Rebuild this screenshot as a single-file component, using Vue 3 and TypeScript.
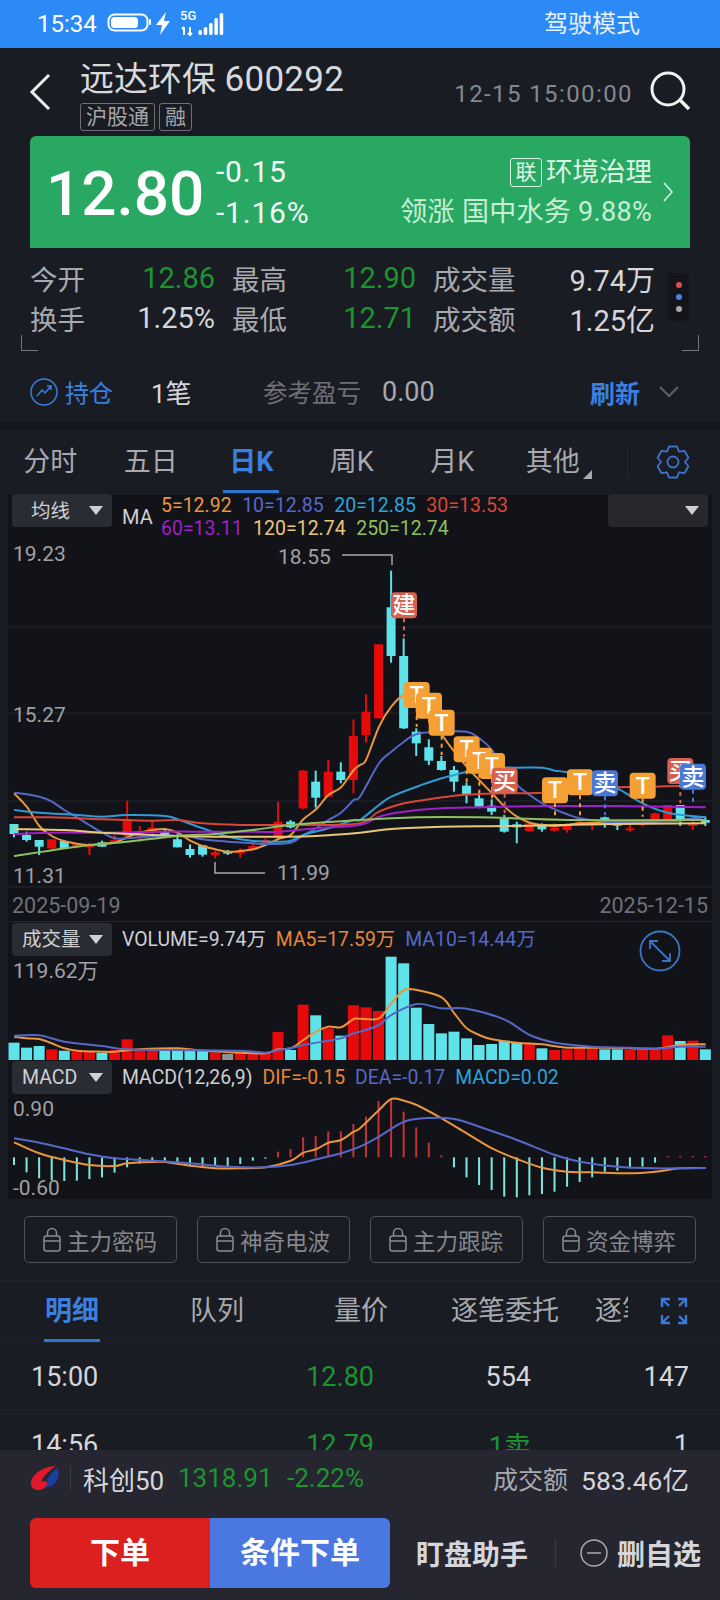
<script setup lang="ts">
type Pt = [number, number]

// chart geometry was read off 3x crops, so values come in as crop units
const colX = (i: number) => 14 + 12.57 * i
const mainY = (v: number) => 530 + v / 3
const lowY = (v: number) => 920 + v / 3

function smooth(left: Pt[], right: Pt[], toY: (v: number) => number): string {
  const pts: Pt[] = [
    ...left.map(([x, y]): Pt => [x / 3, toY(y)]),
    ...right.map(([x, y]): Pt => [360 + x / 3, toY(y)]),
  ]
  let d = `M${pts[0][0].toFixed(1)} ${pts[0][1].toFixed(1)}`
  for (let i = 0; i < pts.length - 1; i++) {
    const p0 = pts[Math.max(i - 1, 0)]
    const p1 = pts[i]
    const p2 = pts[i + 1]
    const p3 = pts[Math.min(i + 2, pts.length - 1)]
    const c1x = p1[0] + (p2[0] - p0[0]) / 6
    const c1y = p1[1] + (p2[1] - p0[1]) / 6
    const c2x = p2[0] - (p3[0] - p1[0]) / 6
    const c2y = p2[1] - (p3[1] - p1[1]) / 6
    d += `C${c1x.toFixed(1)} ${c1y.toFixed(1)} ${c2x.toFixed(1)} ${c2y.toFixed(1)} ${p2[0].toFixed(1)} ${p2[1].toFixed(1)}`
  }
  return d
}

const UP = '#e60a0a'
const DOWN = '#5fe3ea'

// bodyTop, bodyBottom, wickTop, wickBottom, up?
const rawCandles: [number, number, number, number, number][] = [
  [882, 912, 882, 922, 0], [915, 930, 905, 935, 0], [930, 950, 930, 975, 0], [928, 955, 928, 962, 1],
  [933, 955, 933, 955, 0], [940, 950, 938, 955, 1], [942, 952, 938, 975, 1], [937, 950, 932, 950, 0],
  [930, 940, 915, 942, 1], [870, 918, 812, 922, 1], [903, 920, 888, 935, 1], [893, 905, 870, 912, 1],
  [905, 915, 895, 918, 0], [928, 952, 912, 952, 0], [957, 975, 943, 983, 0], [946, 974, 946, 980, 0],
  [967, 975, 962, 985, 1], [965, 970, 960, 975, 0], [962, 970, 955, 983, 1], [948, 960, 942, 962, 1],
  [930, 945, 925, 948, 1], [875, 918, 815, 925, 1], [875, 892, 870, 895, 0], [722, 835, 720, 838, 1],
  [755, 803, 722, 833, 0], [725, 800, 690, 802, 1], [725, 750, 697, 760, 0], [618, 750, 568, 790, 1],
  [545, 615, 493, 638, 1], [343, 565, 343, 565, 1], [232, 378, 122, 398, 0], [378, 595, 325, 597, 0],
  [605, 640, 595, 678, 0], [652, 692, 628, 705, 0], [693, 720, 678, 722, 0], [720, 755, 708, 785, 0],
  [767, 793, 758, 820, 0], [805, 830, 795, 835, 0], [827, 845, 808, 855, 0], [866, 905, 855, 908, 0],
  [883, 892, 875, 940, 0], [880, 903, 875, 905, 1], [883, 898, 880, 905, 0], [893, 902, 880, 905, 1],
  [888, 900, 880, 908, 1], [875, 880, 870, 885, 1], [878, 884, 875, 900, 1], [862, 880, 860, 893, 0],
  [880, 887, 870, 900, 0], [895, 901, 885, 905, 1], [878, 882, 870, 890, 1], [850, 870, 848, 870, 1],
  [825, 868, 825, 868, 1], [825, 870, 825, 888, 0], [880, 888, 870, 900, 1], [870, 878, 860, 888, 0],
]
const candles = rawCandles.map(([t, b, wt, wb, up], i) => ({
  x: colX(i),
  top: mainY(t),
  h: Math.max((b - t) / 3, 2),
  wt: mainY(wt),
  wb: mainY(wb),
  color: up ? UP : DOWN,
}))

const maLines = [
  {
    color: '#e9963f',
    d: smooth(
      [[42, 790], [80, 830], [118, 888], [155, 918], [193, 933], [231, 941], [268, 945], [306, 941], [344, 938], [381, 922], [419, 908], [457, 900], [495, 897], [533, 908], [571, 932], [608, 948], [646, 958], [684, 965], [721, 963], [759, 958], [797, 945], [835, 927], [872, 915], [910, 868], [948, 838], [985, 795], [1023, 772], [1061, 720]],
      [[0, 705], [18, 690], [57, 590], [94, 530], [132, 495], [170, 500], [210, 550], [250, 620], [320, 710], [396, 790], [434, 830], [471, 860], [509, 878], [547, 885], [585, 888], [622, 885], [660, 880], [735, 878], [810, 880], [886, 875], [961, 870], [1037, 860]],
      mainY,
    ),
  },
  {
    color: '#5568c8',
    d: smooth(
      [[42, 788], [118, 800], [155, 815], [193, 840], [231, 862], [268, 885], [306, 907], [344, 925], [381, 925], [419, 922], [495, 917], [533, 918], [571, 920], [608, 928], [684, 935], [759, 940], [797, 942], [872, 938], [910, 915], [948, 895], [985, 870], [1023, 848], [1061, 810]],
      [[0, 800], [57, 700], [94, 665], [132, 635], [170, 612], [245, 605], [320, 605], [358, 625], [396, 660], [434, 720], [471, 765], [509, 795], [547, 820], [585, 838], [622, 853], [660, 865], [735, 875], [810, 875], [886, 875], [961, 872], [1037, 860]],
      mainY,
    ),
  },
  {
    color: '#2f9bd4',
    d: smooth(
      [[42, 840], [118, 848], [231, 855], [306, 860], [381, 855], [495, 858], [533, 868], [608, 895], [684, 920], [759, 933], [835, 935], [872, 932], [910, 915], [985, 895], [1061, 870]],
      [[0, 870], [57, 825], [94, 800], [170, 770], [245, 745], [283, 735], [320, 725], [396, 713], [471, 713], [547, 713], [585, 722], [622, 727], [700, 750], [772, 775], [848, 820], [923, 848], [1037, 862]],
      mainY,
    ),
  },
  {
    color: '#d8453a',
    d: smooth(
      [[42, 862], [155, 862], [306, 868], [457, 872], [533, 870], [608, 880], [721, 885], [835, 885], [948, 885]],
      [[0, 880], [57, 845], [132, 820], [207, 808], [283, 797], [358, 792], [434, 790], [547, 788], [660, 778], [772, 772], [886, 770], [961, 768], [1000, 775]],
      mainY,
    ),
  },
  {
    color: '#a020c8',
    d: smooth(
      [[42, 912], [157, 908], [306, 908], [495, 905], [608, 905], [721, 905], [835, 905], [948, 895]],
      [[0, 885], [57, 860], [132, 845], [245, 835], [358, 832], [547, 828], [772, 828], [1037, 832]],
      mainY,
    ),
  },
  {
    color: '#e8c878',
    d: smooth(
      [[42, 897], [193, 900], [306, 908], [457, 915], [533, 918], [646, 920], [835, 920], [948, 918]],
      [[0, 908], [94, 897], [245, 890], [471, 888], [772, 882], [1037, 880]],
      mainY,
    ),
  },
  {
    color: '#8cc060',
    d: smooth(
      [[42, 978], [231, 950], [381, 935], [533, 918], [646, 912], [759, 900], [872, 885]],
      [[0, 870], [170, 862], [358, 862], [660, 870], [1037, 870]],
      mainY,
    ),
  },
]

const ORANGE = '#f5a035'
const SALMON = '#d8604f'
const BLUE = '#4a78d8'
// label, centre x, centre y, dashed line end (crop units of the right half)
const rawMarkers: [string, number, number, number, string][] = [
  ['建', 132, 226, 320, SALMON],
  ['T', 170, 495, 590, ORANGE],
  ['T', 207, 527, 590, ORANGE],
  ['T', 245, 578, 675, ORANGE],
  ['T', 320, 658, 760, ORANGE],
  ['T', 358, 692, 790, ORANGE],
  ['T', 396, 708, 805, ORANGE],
  ['买', 434, 752, 850, SALMON],
  ['T', 585, 781, 870, ORANGE],
  ['T', 660, 757, 870, ORANGE],
  ['卖', 735, 760, 855, BLUE],
  ['T', 848, 767, 860, ORANGE],
  ['买', 961, 723, 820, SALMON],
  ['卖', 999, 740, 820, BLUE],
]
const markers = rawMarkers.map(([label, x, y, to, color]) => ({
  label,
  x: 360 + x / 3,
  y: mainY(y),
  to: mainY(to),
  color,
}))

const volTops = [
  368, 383, 378, 388, 392, 395, 395, 398, 390, 358, 390, 388, 392, 392, 388, 393, 398, 402, 398, 400, 398, 336, 390, 254,
  286, 325, 347, 256, 262, 273, 110, 130, 263, 312, 340, 335, 355, 375, 372, 362, 367, 372, 385, 390, 388, 382, 385, 388,
  388, 390, 390, 390, 346, 363, 362, 388,
]
const volBars = volTops.map((t, i) => ({
  x: colX(i),
  top: lowY(t),
  h: (420 - t) / 3,
  color: i === 17 ? '#8e9096' : rawCandles[i][4] ? UP : DOWN,
}))
const volLines = [
  {
    color: '#e9963f',
    d: smooth(
      [[42, 350], [80, 355], [118, 357], [155, 370], [193, 385], [231, 392], [306, 395], [344, 395], [419, 388], [533, 385], [608, 392], [721, 398], [797, 400], [835, 388], [872, 385], [910, 360], [948, 335], [985, 320], [1023, 322], [1061, 297]],
      [[0, 296], [57, 295], [94, 250], [132, 210], [170, 210], [245, 232], [283, 280], [320, 325], [358, 345], [396, 358], [471, 368], [547, 373], [622, 383], [735, 383], [886, 386], [961, 375], [1037, 373]],
      lowY,
    ),
  },
  {
    color: '#5568c8',
    d: smooth(
      [[42, 347], [118, 346], [193, 365], [306, 378], [381, 388], [533, 390], [721, 392], [797, 398], [835, 390], [872, 385], [910, 375], [985, 362], [1023, 355], [1061, 340]],
      [[0, 335], [57, 315], [94, 285], [170, 252], [245, 265], [320, 266], [432, 298], [509, 345], [585, 368], [697, 380], [810, 383], [886, 386], [961, 380], [1037, 380]],
      lowY,
    ),
  },
]

const macdEnds = [
  735, 757, 775, 780, 783, 782, 777, 772, 758, 742, 730, 725, 722, 732, 735, 738, 738, 738, 732, 722, 716, 695, 687, 652,
  648, 634, 634, 612, 590, 543, 540, 575, 622, 668, 706, 742, 772, 795, 810, 830, 832, 826, 822, 815, 800, 786, 772, 755,
  752, 745, 740, 728, 708, 708, 708, 708,
]
const macdBars = macdEnds.map((e, i) => {
  const up = e < 712
  return {
    x: colX(i),
    top: lowY(up ? e : 712),
    h: Math.abs(e - 712) / 3,
    color: up ? '#c43434' : '#7de8e0',
  }
})
const macdLines = [
  {
    color: '#e9963f',
    d: smooth(
      [[42, 667], [118, 700], [193, 720], [268, 735], [344, 738], [381, 730], [457, 726], [495, 726], [571, 737], [646, 745], [721, 745], [797, 742], [872, 722], [910, 698], [948, 688], [985, 668], [1023, 660], [1061, 635]],
      [[0, 625], [57, 570], [94, 537], [132, 542], [170, 555], [245, 595], [320, 640], [396, 685], [471, 717], [547, 743], [622, 755], [697, 757], [810, 760], [886, 755], [961, 745], [1037, 744]],
      lowY,
    ),
  },
  {
    color: '#5568c8',
    d: smooth(
      [[42, 655], [118, 668], [193, 685], [268, 703], [344, 715], [457, 722], [571, 730], [684, 740], [797, 742], [872, 735], [948, 718], [1023, 700]],
      [[0, 680], [57, 650], [132, 605], [207, 594], [283, 597], [358, 620], [471, 660], [585, 705], [660, 725], [772, 740], [886, 745], [961, 745], [1037, 744]],
      lowY,
    ),
  },
]

function gearPath(cx: number, cy: number, rOut: number, rIn: number, teeth: number): string {
  const pts: string[] = []
  const step = (Math.PI * 2) / teeth
  for (let i = 0; i < teeth; i++) {
    const a = -Math.PI / 2 + i * step
    const offs: [number, number][] = [
      [-0.5, rIn], [-0.24, rOut], [0.24, rOut], [0.5, rIn],
    ]
    for (const [o, r] of offs) {
      const t = a + o * step
      pts.push(`${(cx + Math.cos(t) * r).toFixed(1)} ${(cy + Math.sin(t) * r).toFixed(1)}`)
    }
  }
  return `M${pts.join('L')}Z`
}
const gear = gearPath(17, 17, 16, 12, 6)

const maRowOne = [
  { text: '5=12.92', color: '#e9963f' },
  { text: '10=12.85', color: '#5568c8' },
  { text: '20=12.85', color: '#2aa3dc' },
  { text: '30=13.53', color: '#d8453a' },
]
const maRowTwo = [
  { text: '60=13.11', color: '#a020c8' },
  { text: '120=12.74', color: '#e8c878' },
  { text: '250=12.74', color: '#8cc060' },
]

const lockedTools = ['主力密码', '神奇电波', '主力跟踪', '资金博弈']
const chartTabs = ['分时', '五日', '日K', '周K', '月K', '其他']
const tradeTabs = ['明细', '队列', '量价', '逐笔委托']
const signalBars = [
  { h: 5 }, { h: 8 }, { h: 12 }, { h: 17 }, { h: 22 },
]
</script>

<template>
  <div class="page">
    <div class="status">
      <span class="clock">15:34</span>
      <svg class="status-icons" width="130" height="40" viewBox="0 0 130 40">
        <rect x="8.5" y="10.5" width="39" height="16" rx="6" fill="none" stroke="#fff" stroke-width="2" />
        <rect x="11" y="13" width="27" height="11" rx="3.5" fill="#fff" />
        <rect x="49" y="15" width="2" height="6" rx="1" fill="#fff" />
        <path d="M66 8 56 21h6l-2 10 10-14h-6z" fill="#fff" />
        <text x="80" y="16" class="five-g">5G</text>
        <path d="M84 23v8M82 25l2-2M90 23v8M88 29l2 2 2-2" stroke="#fff" stroke-width="2" fill="none" />
        <rect v-for="(b, i) in signalBars" :key="i" :x="98.500 + i * 5.300" :y="31 - b.h" width="3.500" :height="b.h" rx="1.500" fill="#fff" />
      </svg>
      <span class="drive">驾驶模式</span>
    </div>

    <header class="head">
      <svg class="back" width="22" height="38" viewBox="0 0 22 38">
        <path d="M20 2 3 19l17 17" fill="none" stroke="#eee" stroke-width="3" />
      </svg>
      <div class="title-col">
        <div class="title"><span>远达环保</span> <em>600292</em></div>
        <div class="tags">
          <span class="tag">沪股通</span>
          <span class="tag">融</span>
        </div>
      </div>
      <span class="stamp">12-15 15:00:00</span>
      <svg class="search" width="42" height="42" viewBox="0 0 42 42">
        <circle cx="19" cy="18" r="16" fill="none" stroke="#f2f2f2" stroke-width="3" />
        <path d="M31 29l9 9" stroke="#f2f2f2" stroke-width="3.500" />
      </svg>
    </header>

    <section class="quote">
      <div class="price">12.80</div>
      <div class="change">
        <span>-0.15</span>
        <span>-1.16%</span>
      </div>
      <div class="sector">
        <div class="sector-name"><span class="lian">联</span>环境治理</div>
        <div class="sector-lead">领涨 国中水务 9.88%</div>
      </div>
      <svg class="quote-arrow" width="12" height="22" viewBox="0 0 12 22">
        <path d="M2 2l8 9-8 9" fill="none" stroke="#d7f1e0" stroke-width="1.600" />
      </svg>
    </section>

    <section class="stats">
      <div class="stat-grid">
        <div class="cell"><span>今开</span><b class="green">12.86</b></div>
        <div class="cell"><span>最高</span><b class="green">12.90</b></div>
        <div class="cell"><span>成交量</span><b>9.74万</b></div>
        <div class="cell"><span>换手</span><b>1.25%</b></div>
        <div class="cell"><span>最低</span><b class="green">12.71</b></div>
        <div class="cell"><span>成交额</span><b>1.25亿</b></div>
      </div>
      <div class="dots"><i class="d1"></i><i class="d2"></i><i class="d3"></i></div>
      <i class="corner corner-l"></i>
      <i class="corner corner-r"></i>
    </section>

    <section class="holding">
      <svg width="28" height="28" viewBox="0 0 28 28" class="hold-icon">
        <circle cx="14" cy="14" r="13" fill="none" stroke="#3a80e0" stroke-width="1.500" />
        <path d="M7 18l5-6 3 3 6-7M17 8h4v4" fill="none" stroke="#3a80e0" stroke-width="1.500" />
      </svg>
      <span class="hold-label">持仓</span>
      <span class="hold-count">1笔</span>
      <span class="hold-ref">参考盈亏</span>
      <span class="hold-val">0.00</span>
      <span class="refresh">刷新</span>
      <svg width="20" height="12" viewBox="0 0 20 12">
        <path d="M1 1l9 9 9-9" fill="none" stroke="#5d6068" stroke-width="2" />
      </svg>
    </section>

    <nav class="chart-tabs">
      <span v-for="t in chartTabs" :key="t" class="chart-tab" :class="{ on: t === '日K' }">{{ t }}</span>
      <i class="tab-corner"></i>
      <i class="tab-sep"></i>
      <svg width="34" height="34" viewBox="0 0 34 34" class="gear">
        <path :d="gear" fill="none" stroke="#3a74cc" stroke-width="1.800" stroke-linejoin="round" />
        <circle cx="17" cy="17" r="5.500" fill="none" stroke="#3a74cc" stroke-width="1.800" />
      </svg>
    </nav>

    <div class="chart">
      <div class="panel panel-main">
        <svg width="704" height="427" viewBox="8 495 704 427" class="plot">
          <line v-for="y in [627, 713, 801, 887]" :key="y" x1="8" x2="712" :y1="y" :y2="y" stroke="#24262c" />
          <line x1="8" x2="712" y1="921.500" y2="921.500" stroke="#24262c" />
          <g v-for="(c, i) in candles" :key="i">
            <line :x1="c.x" :x2="c.x" :y1="c.wt" :y2="c.wb" :stroke="c.color" stroke-width="2" />
            <rect :x="c.x - 4.500" :y="c.top" width="9" :height="c.h" :fill="c.color" />
          </g>
          <path v-for="l in maLines" :key="l.color" :d="l.d" fill="none" :stroke="l.color" stroke-width="2" />
          <path d="M342 555h50v10" fill="none" stroke="#a8a9ae" stroke-width="1.500" />
          <path d="M215 862v11h50" fill="none" stroke="#a8a9ae" stroke-width="1.500" />
          <g v-for="(m, i) in markers" :key="i">
            <line :x1="m.x" :x2="m.x" :y1="m.y + 13" :y2="m.to" :stroke="m.color" stroke-width="2" stroke-dasharray="4 4" />
            <rect :x="m.x - 13" :y="m.y - 13" width="26" height="26" rx="4" :fill="m.color" />
            <text :x="m.x" :y="m.y + 8" class="mark" text-anchor="middle">{{ m.label }}</text>
          </g>
          <text x="13" y="561" class="axis">19.23</text>
          <text x="13" y="722" class="axis">15.27</text>
          <text x="13" y="883" class="axis">11.31</text>
          <text x="278" y="564" class="axis">18.55</text>
          <text x="277" y="880" class="axis">11.99</text>
          <text x="12" y="913" class="date">2025-09-19</text>
          <text x="708" y="913" class="date" text-anchor="end">2025-12-15</text>
        </svg>
        <div class="picker picker-ma">均线<i class="tri"></i></div>
        <div class="legend-label">MA</div>
        <div class="ma-values">
          <div class="ma-row">
            <span v-for="m in maRowOne" :key="m.text" :style="{ color: m.color }">{{ m.text }}</span>
          </div>
          <div class="ma-row">
            <span v-for="m in maRowTwo" :key="m.text" :style="{ color: m.color }">{{ m.text }}</span>
          </div>
        </div>
        <div class="picker picker-right"><i class="tri"></i></div>
      </div>

      <div class="panel panel-vol">
        <svg width="704" height="138" viewBox="8 922 704 138" class="plot">
          <rect v-for="(b, i) in volBars" :key="i" :x="b.x - 5.500" :y="b.top" width="11" :height="b.h" :fill="b.color" />
          <path v-for="l in volLines" :key="l.color" :d="l.d" fill="none" :stroke="l.color" stroke-width="2" />
          <text x="13" y="978" class="axis">119.62万</text>
          <circle cx="660" cy="951" r="19.500" fill="none" stroke="#3a76c8" stroke-width="1.800" />
          <path d="M650 941l20 20M650 949v-8h8M670 953v8h-8" fill="none" stroke="#3a76c8" stroke-width="1.800" />
        </svg>
        <div class="picker">成交量<i class="tri"></i></div>
        <div class="legend">
          <span class="plain">VOLUME=9.74万</span>
          <span class="orange">MA5=17.59万</span>
          <span class="indigo">MA10=14.44万</span>
        </div>
      </div>

      <div class="panel panel-macd">
        <svg width="704" height="139" viewBox="8 1060 704 139" class="plot">
          <rect v-for="(b, i) in macdBars" :key="i" :x="b.x - 1" :y="b.top" width="2" :height="b.h" :fill="b.color" />
          <path v-for="l in macdLines" :key="l.color" :d="l.d" fill="none" :stroke="l.color" stroke-width="2" />
          <text x="13" y="1116" class="axis">0.90</text>
          <text x="13" y="1195" class="axis">-0.60</text>
        </svg>
        <div class="picker">MACD<i class="tri"></i></div>
        <div class="legend legend-macd">
          <span class="plain">MACD(12,26,9)</span>
          <span class="orange">DIF=-0.15</span>
          <span class="indigo">DEA=-0.17</span>
          <span class="sky">MACD=0.02</span>
        </div>
      </div>
    </div>

    <section class="tools">
      <button v-for="t in lockedTools" :key="t" class="tool">
        <svg width="18" height="26" viewBox="0 0 18 26">
          <rect x="1" y="9" width="16" height="15" rx="2.500" fill="none" stroke="#8a8c94" stroke-width="1.500" />
          <path d="M4.500 9V6a4.500 4.500 0 0 1 9 0v3M1 14h16" fill="none" stroke="#8a8c94" stroke-width="1.500" />
        </svg>
        <span>{{ t }}</span>
      </button>
    </section>

    <nav class="trade-tabs">
      <span v-for="(t, i) in tradeTabs" :key="t" class="trade-tab" :class="['t' + i, { on: i === 0 }]">{{ t }}</span>
      <span class="trade-cut"><span>逐笔成交</span></span>
      <svg width="28" height="28" viewBox="0 0 28 28" class="expand">
        <path d="M2 10V2h8M2 2l7 7M26 10V2h-8M26 2l-7 7M2 18v8h8M2 26l7-7M26 18v8h-8M26 26l-7-7" fill="none" stroke="#3a7ad8" stroke-width="2.400" />
      </svg>
    </nav>

    <div class="trades">
      <div class="trade-row">
        <span>15:00</span><span class="green">12.80</span><span>554</span><span>147</span>
      </div>
      <div class="trade-row">
        <span>14:56</span><span class="green">12.79</span><span class="green">1卖</span><span>1</span>
      </div>
    </div>

    <footer class="foot">
      <div class="index-row">
        <svg width="30" height="27" viewBox="0 0 30 27" class="logo">
          <path d="M27 3c3 5 2 11-3 16-3 3-8 4-11 3 3-2 5-5 4-8 3-4 6-8 10-11z" fill="#1a3f9e" />
          <path d="M26 1C17 1 8 5 3 12c-4 6-2 12 4 13 5 1 10-3 10-7 0-2-3-3-5-1-1-3 5-10 14-16z" fill="#e3182d" />
        </svg>
        <i class="index-sep"></i>
        <span class="index-name">科创50</span>
        <span class="green index-val">1318.91</span>
        <span class="green index-pct">-2.22%</span>
        <span class="index-turn">成交额</span>
        <span class="index-amt">583.46亿</span>
      </div>
      <div class="action-row">
        <div class="orders">
          <span class="order red">下单</span>
          <span class="order blue">条件下单</span>
        </div>
        <span class="helper">盯盘助手</span>
        <i class="action-sep"></i>
        <svg width="28" height="28" viewBox="0 0 28 28" class="minus">
          <circle cx="14" cy="14" r="13" fill="none" stroke="#a8a9ae" stroke-width="1.500" />
          <path d="M7 14h14" stroke="#a8a9ae" stroke-width="1.500" />
        </svg>
        <span class="remove">删自选</span>
      </div>
    </footer>
  </div>
</template>

<style>
html, body { margin: 0; background: #1a1c24; }
</style>

<style scoped>
.page {
  position: relative;
  width: 720px;
  height: 1600px;
  overflow: hidden;
  background: #1a1c24;
  color: #cfd0d4;
  font-family: Roboto, "Noto Sans CJK SC", sans-serif;
}
.green { color: #1c9430; }

.status { height: 48px; background: #2b8af5; display: flex; align-items: center; color: #fff; position: relative; }
.clock { margin-left: 37px; font-size: 24px; width: 63px; }
.status-icons { flex: none; }
.five-g { font-size: 13px; fill: #fff; font-weight: 500; }
.drive { position: absolute; left: 544px; top: 10px; font-size: 24px; line-height: 28px; color: #e6f1ff; }

.head { height: 88px; display: flex; align-items: center; position: relative; }
.back { margin-left: 29px; flex: none; }
.title-col { margin-left: 29px; flex: 1; padding-top: 5px; }
.title { font-size: 34px; line-height: 40px; color: #d8d9dd; white-space: nowrap; }
.title em { font-style: normal; font-size: 35px; letter-spacing: 0.3px; }
.tags { display: flex; gap: 4px; margin-top: 3px; }
.tag { border: 1px solid #6f7076; border-radius: 3px; font-size: 21px; line-height: 26px; padding: 0 5px; color: #a5a6ab; }
.stamp { font-size: 24px; letter-spacing: 1.400px; color: #85878e; margin-right: 16px; padding-top: 3px; white-space: nowrap; }
.search { margin-right: 29px; flex: none; }

.quote {
  margin: 0 30px;
  height: 112px;
  background: #29a863;
  border-radius: 6px 6px 0 0;
  display: flex;
  align-items: center;
  color: #fff;
}
.price { margin-left: 16px; width: 170px; font-size: 62px; font-weight: 500; line-height: 72px; padding-top: 4px; white-space: nowrap; }
.change { display: flex; flex-direction: column; gap: 7px; font-size: 30px; line-height: 34px; color: #f0fbf4; letter-spacing: 0.8px; padding-top: 1px; }
.sector { margin-left: auto; text-align: right; display: flex; flex-direction: column; gap: 6px; color: #c8efd6; }
.sector-name { font-size: 26.500px; line-height: 34px; display: flex; align-items: center; justify-content: flex-end; color: #dcf5e5; }
.lian { border: 1px solid #dcf5e5; border-radius: 3px; font-size: 21px; line-height: 27px; width: 30px; text-align: center; margin-right: 4px; }
.sector-lead { font-size: 27px; line-height: 34px; white-space: nowrap; letter-spacing: 0.3px; }
.quote-arrow { margin: 0 16px 0 10px; flex: none; }

.stats { height: 116px; position: relative; padding-top: 10px; box-sizing: border-box; }
.stat-grid { margin-left: 30px; display: grid; grid-template-columns: 185px 184px 222px; column-gap: 17px; grid-auto-rows: 40px; }
.cell { display: flex; justify-content: space-between; align-items: center; font-size: 27.500px; color: #a8a9ae; }
.cell b { font-weight: 400; color: #d5d6da; font-size: 29px; }
.cell b.green { color: #1c9430; }
.dots { position: absolute; left: 668px; top: 25px; width: 21px; height: 48px; background: #14151b; display: flex; flex-direction: column; align-items: center; justify-content: center; gap: 6px; border-radius: 3px; }
.dots i { width: 6px; height: 6px; border-radius: 50%; }
.d1 { background: #d8524a; }
.d2 { background: #4a80e0; }
.d3 { background: #a8a9ae; }
.corner { position: absolute; top: 87px; width: 16px; height: 15px; border-bottom: 1.500px solid #777; }
.corner-l { left: 21px; border-left: 1.500px solid #777; }
.corner-r { left: 682px; border-right: 1.500px solid #777; }

.holding { height: 58px; display: flex; align-items: center; font-size: 24px; padding: 0 0 3px 30px; box-sizing: border-box; }
.hold-icon { flex: none; }
.hold-label { margin-left: 7px; color: #3a80e0; width: 86px; }
.hold-count { width: 112px; color: #d5d6da; font-size: 26px; }
.hold-ref { color: #6e7077; font-size: 24.500px; width: 119px; }
.hold-val { color: #a8a9ae; width: 208px; font-size: 27px; }
.refresh { color: #3a80e0; font-weight: 700; width: 69px; font-size: 25px; }

.chart-tabs { height: 65px; border-top: 8px solid #14161c; margin-top: 0; display: flex; align-items: center; position: relative; box-sizing: content-box; }
.chart-tab { width: 100.500px; text-align: center; font-size: 27px; color: #a8a9ae; flex: none; position: relative; padding-bottom: 6px; }
.chart-tab.on { color: #3a80e0; font-weight: 700; }
.chart-tab.on::after { content: ""; position: absolute; left: 22px; width: 56px; height: 3px; bottom: -8px; background: #2f74d0; }
.tab-corner { position: absolute; left: 583px; top: 40px; border-left: 9px solid transparent; border-bottom: 9px solid #a8a9ae; }
.tab-sep { position: absolute; left: 627px; top: 16px; width: 1px; height: 32px; background: #24262c; }
.gear { position: absolute; left: 656px; top: 15px; }

.chart { margin: 0 8px; width: 704px; background: #121318; }
.panel { position: relative; }
.panel-main { height: 427px; }
.panel-vol { height: 138px; }
.panel-macd { height: 139px; }
.plot { display: block; overflow: visible; }
.plot text { font-family: Roboto, "Noto Sans CJK SC", sans-serif; }
.axis { font-size: 21px; fill: #a0a1a6; }
.date { font-size: 21.500px; fill: #6f7076; }
.mark { font-size: 23px; fill: #fff; font-weight: 500; }

.picker {
  position: absolute;
  left: 4px;
  top: 1px;
  width: 100px;
  height: 33px;
  border-radius: 4px;
  background: #2a2c33;
  font-size: 19.500px;
  line-height: 33px;
  color: #cfd0d4;
  padding-left: 10px;
  box-sizing: border-box;
  white-space: nowrap;
}
.tri { position: absolute; right: 9px; top: 12px; border-left: 7.500px solid transparent; border-right: 7.500px solid transparent; border-top: 9px solid #cfd0d4; }
.picker-ma { top: -1px; padding-left: 19px; line-height: 36px; }
.picker-right { top: -1px; left: 600px; background: #26282d; }
.legend-label { position: absolute; left: 114px; top: 9px; font-size: 20px; line-height: 26px; color: #cfd0d4; }
.ma-values { position: absolute; left: 153px; top: -1px; font-size: 19.500px; line-height: 23px; }
.ma-row { display: flex; gap: 10.500px; white-space: nowrap; }

.legend { position: absolute; left: 114px; top: -1px; height: 33px; display: flex; align-items: center; gap: 10px; font-size: 19.400px; white-space: nowrap; }
.legend-macd { top: 1px; }
.plain { color: #cfd0d4; }
.orange { color: #e9863a; }
.indigo { color: #5568c8; }
.sky { color: #2aa3dc; }

.tools { height: 82px; padding: 17px 24px 0; box-sizing: border-box; display: flex; gap: 20px; border-bottom: 1px solid #20222a; }
.tool {
  width: 153px;
  height: 47px;
  padding: 0 0 0 18px;
  border: 1px solid #50525a;
  border-radius: 5px;
  background: transparent;
  display: flex;
  align-items: center;
  gap: 6px;
  color: #85878e;
  font-family: inherit;
  font-size: 22.500px;
  white-space: nowrap;
  box-sizing: border-box;
}

.trade-tabs { height: 61px; position: relative; border-bottom: 1px solid #20222a; font-size: 27px; color: #a8a9ae; }
.trade-tab { position: absolute; top: 12px; line-height: 36px; white-space: nowrap; }
.t0 { left: 45px; }
.t1 { left: 190px; }
.t2 { left: 334px; }
.t3 { left: 451px; }
.trade-tab.on { color: #3a80e0; font-weight: 700; }
.trade-tab.on::after { content: ""; position: absolute; left: -1px; width: 56px; height: 3px; bottom: -13px; background: #2f74d0; }
.trade-cut { position: absolute; left: 595px; top: 12px; width: 33px; overflow: hidden; line-height: 36px; white-space: nowrap; }
.expand { position: absolute; left: 660px; top: 16px; }

.trades { font-size: 27px; color: #d5d6da; }
.trade-row { height: 67px; border-bottom: 1px solid #20222a; display: grid; grid-template-columns: 100px 243px 157px 158px; padding-left: 31px; align-items: center; text-align: right; }
.trade-row span:first-child { text-align: left; }
.trade-row .green { color: #1c9430; }

.foot { position: absolute; left: 0; top: 1450px; width: 720px; height: 150px; background: #252630; }
.index-row { height: 56px; display: flex; align-items: center; position: relative; font-size: 26px; padding-left: 30px; box-sizing: border-box; }
.logo { flex: none; }
.index-sep { width: 1px; height: 24px; background: #3a3c46; margin-left: 10px; }
.index-name { margin-left: 12px; color: #d5d6da; width: 95px; white-space: nowrap; }
.index-val { width: 109px; }
.index-turn { position: absolute; left: 493px; color: #a8a9ae; font-size: 25px; }
.index-amt { position: absolute; right: 31px; color: #d5d6da; font-size: 26.500px; }
.action-row { margin-top: 12px; display: flex; align-items: center; padding-left: 30px; position: relative; }
.orders { display: flex; border-radius: 6px; overflow: hidden; width: 360px; height: 70px; }
.order { width: 180px; color: #fff; font-size: 30px; font-weight: 700; text-align: center; line-height: 70px; }
.red { background: #dc1f1f; }
.blue { background: #4a78e0; }
.helper { margin-left: 26px; font-size: 28px; font-weight: 700; color: #d5d6da; white-space: nowrap; }
.action-sep { margin-left: 27px; width: 1px; height: 28px; background: #3a3c46; }
.minus { margin-left: 24px; flex: none; }
.remove { margin-left: 9px; font-size: 28px; font-weight: 700; color: #d5d6da; white-space: nowrap; }
</style>
